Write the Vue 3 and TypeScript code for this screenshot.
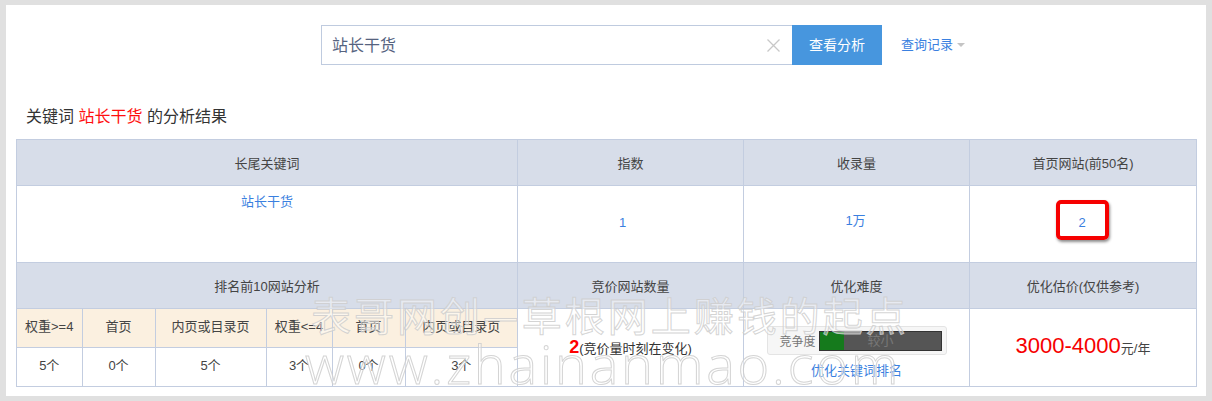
<script setup lang="ts">
const rankHeads: string[] = ['权重>=4', '首页', '内页或目录页', '权重<=4', '首页', '内页或目录页']
const rankValues: string[] = ['5个', '0个', '5个', '3个', '0个', '3个']
</script>

<template>
  <div class="page">
    <main class="panel">
      <div class="search">
        <div class="input">
          <span class="query">站长干货</span>
          <svg class="clear" width="13" height="13" viewBox="0 0 13 13">
            <path d="M.5.5 12.5 12.5M12.5.5.5 12.5" stroke="#c8c8c8" stroke-width="1.3" fill="none" />
          </svg>
        </div>
        <button class="go">查看分析</button>
        <a class="history">查询记录<i class="caret"></i></a>
      </div>

      <h2 class="title">关键词 <em>站长干货</em> 的分析结果</h2>

      <table class="result">
        <colgroup>
          <col class="c1" /><col class="c2" /><col class="c3" /><col class="c4" />
        </colgroup>
        <tbody>
          <tr class="head h1">
            <th>长尾关键词</th><th>指数</th><th>收录量</th><th>首页网站(前50名)</th>
          </tr>
          <tr class="data">
            <td class="top"><a>站长干货</a></td>
            <td class="index"><a>1</a></td>
            <td class="count"><a>1万</a></td>
            <td class="sites"><span class="mark"><a>2</a></span></td>
          </tr>
          <tr class="head h2">
            <th>排名前10网站分析</th><th>竞价网站数量</th><th>优化难度</th><th>优化估价(仅供参考)</th>
          </tr>
          <tr class="detail">
            <td class="nest">
              <table class="rank">
                <colgroup>
                  <col class="r0" /><col class="r2" /><col class="r3" /><col class="r1" /><col class="r2" /><col class="r5" />
                </colgroup>
                <tbody>
                  <tr class="rh"><td v-for="(h, i) in rankHeads" :key="i">{{ h }}</td></tr>
                  <tr class="rv"><td v-for="(v, i) in rankValues" :key="i">{{ v }}</td></tr>
                </tbody>
              </table>
            </td>
            <td class="bid"><strong>2</strong>(竞价量时刻在变化)</td>
            <td class="level">
              <div class="meter">
                <span class="label">竞争度</span>
                <span class="track"><span class="fill" style="width: 20%"></span><span class="word">较小</span></span>
              </div>
              <a class="opt">优化关键词排名</a>
            </td>
            <td class="price"><strong>3000-4000</strong>元/年</td>
          </tr>
        </tbody>
      </table>
    </main>

    <div class="wm wm1">表哥网创—草根网上赚钱的起点</div>
    <div class="wm wm2">www.zhainanmao.com</div>
  </div>
</template>

<style>
html, body { margin: 0; background: #e0e0e0; }
</style>

<style scoped>
.page {
  position: relative;
  width: 1212px;
  height: 401px;
  overflow: hidden;
  box-sizing: border-box;
  padding: 5px 6px;
  background: #e0e0e0;
  font-family: "Liberation Sans", "Noto Sans CJK SC", sans-serif;
  font-size: 13px;
  color: #444;
}
.panel {
  height: 391px;
  box-sizing: border-box;
  padding: 20px 10px 0;
  background: #fff;
}
.search {
  display: flex;
  align-items: center;
  height: 40px;
  margin-left: 305px;
}
.input {
  display: flex;
  align-items: center;
  justify-content: space-between;
  width: 471px;
  height: 40px;
  box-sizing: border-box;
  padding: 0 12px 0 10px;
  border: 1px solid #bfcbdf;
  border-right: 0;
}
.query { font-size: 16px; color: #56637f; padding-bottom: 2px; }
.go {
  width: 90px;
  height: 40px;
  border: 0;
  padding: 0 0 2px;
  background: #4796de;
  color: #fff;
  font: inherit;
  font-size: 14px;
}
.history {
  display: flex;
  align-items: center;
  margin: 0 0 4px 19px;
  color: #3a80e0;
}
.caret {
  width: 0;
  height: 0;
  margin: 4px 0 0 4px;
  border-left: 4px solid transparent;
  border-right: 4px solid transparent;
  border-top: 4px solid #c4c4c4;
}
.title {
  margin: 41px 0 0 10px;
  height: 22px;
  line-height: 22px;
  font-size: 16px;
  font-weight: 400;
  color: #333;
}
.title em { font-style: normal; color: #ff0f0f; }
.result {
  width: 1180px;
  height: 247px;
  margin-top: 11px;
  border-collapse: collapse;
  table-layout: fixed;
  border: 1px solid #c3cde0;
}
.c1 { width: 501px; }
.c2, .c3 { width: 226px; }
.c4 { width: 227px; }
.result > tbody > tr > th,
.result > tbody > tr > td {
  padding: 0;
  border: 1px solid #c3cde0;
  text-align: center;
  vertical-align: middle;
}
.result th { font-weight: 400; background: #d7dde9; color: #444; }
.h1, .h2 { height: 46px; }
.data { height: 77px; }
.detail { height: 77px; }
.result a { color: #3a80e0; }
.result > tbody > tr > td.top { vertical-align: top; padding-top: 5px; }
.result > tbody > tr > td.index { padding: 0 16px 4px 0; }
.result > tbody > tr > td.count { padding: 0 2px 9px 0; }
.result > tbody > tr > td.sites { padding: 0 2px 8px 0; }
.mark {
  display: inline-flex;
  align-items: center;
  justify-content: center;
  width: 53px;
  height: 40px;
  box-sizing: border-box;
  padding-top: 5px;
  border: 4px solid #f60000;
  border-radius: 5px;
  box-shadow: 1px 2px 3px rgba(0, 0, 0, 0.45);
  vertical-align: middle;
}
.result > tbody > tr > td.nest { vertical-align: top; }
.rank {
  width: 100%;
  height: 77px;
  border-collapse: collapse;
  table-layout: fixed;
}
.r0 { width: 65px; }
.r1 { width: 66px; }
.r2 { width: 73px; }
.r3 { width: 111px; }
.r5 { width: 112px; }
.rank td {
  padding: 0 0 2px;
  line-height: 16px;
  text-align: center;
  border-left: 1px solid #c3cde0;
  border-bottom: 1px solid #c3cde0;
}
.rank td:first-child { border-left: 0; }
.rv td { border-bottom: 0; }
.rh td { background: #fbf0e0; height: 38px; box-sizing: border-box; }
.rv td { height: 38px; box-sizing: border-box; }
.result > tbody > tr > td.bid { padding-bottom: 0; color: #333; }
.bid strong { font-size: 18px; color: #ff0000; }
.result > tbody > tr > td.level { vertical-align: top; padding-top: 17px; }
.meter {
  display: flex;
  align-items: center;
  width: 180px;
  height: 29px;
  box-sizing: border-box;
  margin: 0 0 8px 23px;
  padding: 0 4px 0 8px;
  border: 1px solid #e4e4e4;
  border-radius: 3px;
  background: #f6f6f6;
  color: #777;
  font-size: 12px;
}
.label { width: 43px; white-space: nowrap; }
.track {
  position: relative;
  flex: 1;
  height: 20px;
  box-sizing: border-box;
  border: 1px solid #333;
  background: #555;
  text-align: center;
  line-height: 18px;
  font-size: 13px;
}
.fill {
  position: absolute;
  left: 0;
  top: 0;
  bottom: 0;
  background: #157a1c;
}
.word { position: relative; color: #777; }
.opt { display: block; line-height: 16px; }
.result > tbody > tr > td.price { padding-bottom: 4px; color: #444; }
.price strong {
  font-size: 22px;
  font-weight: 400;
  color: #f60000;
}
.wm {
  position: absolute;
  white-space: nowrap;
  pointer-events: none;
  color: rgba(255, 255, 255, 0.42);
  -webkit-text-stroke: 1px rgba(205, 205, 205, 0.85);
}
.wm1 {
  left: 311px;
  top: 286px;
  font-family: "Noto Sans CJK SC", sans-serif;
  font-size: 40px;
  line-height: 56px;
  letter-spacing: 3px;
}
.wm2 {
  left: 305px;
  top: 332px;
  font-family: "Open Sans", sans-serif;
  font-size: 54px;
  font-weight: 300;
  line-height: 62px;
  letter-spacing: 2.8px;
}
</style>
